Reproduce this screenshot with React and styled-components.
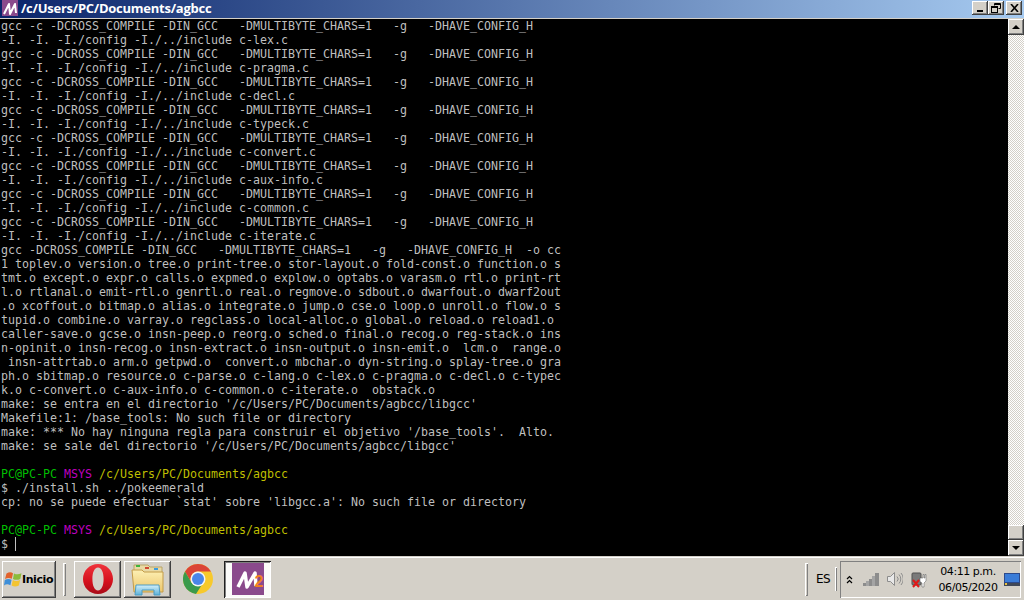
import React from 'react'
import styled, { createGlobalStyle, css } from 'styled-components'

const GlobalStyle = createGlobalStyle`
  html, body { margin: 0; padding: 0; background: #000; }
  * { box-sizing: border-box; }
`

const raised = css`
  background: #d4d0c8;
  box-shadow: inset -1px -1px 0 #404040, inset 1px 1px 0 #fff, inset -2px -2px 0 #808080;
`

const Screen = styled.div`
  width: 1024px;
  height: 600px;
  display: flex;
  flex-direction: column;
  overflow: hidden;
`

const TitleBar = styled.div`
  height: 19px;
  flex: none;
  display: flex;
  align-items: center;
  padding: 0 2px 2px 2px;
  background: linear-gradient(to right, #0a246a, #a6caf0);
  border-bottom: 1px solid #d4d0c8;
`

const TitleText = styled.span`
  margin-left: 3px;
  color: #fff;
  font: bold 13px "Open Sans", sans-serif;
  letter-spacing: -0.25px;
  white-space: pre;
`

const WindowButtons = styled.div`
  margin-left: auto;
  display: flex;
`

const WindowButton = styled.div`
  ${raised}
  width: 16px;
  height: 14px;
  display: flex;
  align-items: center;
  justify-content: center;
  margin-left: ${p => p.$gap || 0}px;
`

const Body = styled.div`
  flex: 1;
  min-height: 0;
  display: flex;
  background: #000;
`

const Output = styled.div`
  flex: 1;
  padding-left: 1px;
  font-family: "DejaVu Sans Mono", monospace;
  font-size: 11.63px;
  color: #bfbfbf;
`

const Line = styled.div`
  height: 14px;
  line-height: 14px;
  white-space: pre;
`

const Seg = styled.span`
  color: ${p => p.$color};
`

const Caret = styled.span`
  display: inline-block;
  width: 1px;
  height: 14px;
  background: #bfbfbf;
  vertical-align: top;
`

const ScrollBar = styled.div`
  width: 16px;
  flex: none;
  display: flex;
  flex-direction: column;
`

const ScrollButton = styled.div`
  ${raised}
  height: 16px;
  flex: none;
  display: flex;
  align-items: center;
  justify-content: center;
`

const Track = styled.div`
  flex: 1;
  background-image: conic-gradient(#d4d0c8 25%, #fff 0 50%, #d4d0c8 0 75%, #fff 0);
  background-size: 2px 2px;
`

const Thumb = styled.div`
  ${raised}
  height: 15px;
  flex: none;
`

const Arrow = styled.div`
  width: 0;
  height: 0;
  border-left: 4px solid transparent;
  border-right: 4px solid transparent;
  ${p => (p.$down ? 'border-top: 4px solid #000;' : 'border-bottom: 4px solid #000;')}
`

const TaskBar = styled.div`
  height: 44px;
  flex: none;
  display: flex;
  align-items: center;
  padding: 3px 3px 2px 2px;
  background: #d4d0c8;
  border-top: 1px solid #d4d0c8;
  box-shadow: inset 0 1px 0 #fff;
`

const StartButton = styled.div`
  ${raised}
  width: 54px;
  height: 37px;
  display: flex;
  align-items: center;
  padding-left: 2px;
  font: bold 11px "DejaVu Sans", sans-serif;
  letter-spacing: -0.4px;
  color: #000;
`

const Divider = styled.div`
  width: ${p => (p.$small ? 2 : 3)}px;
  height: ${p => (p.$small ? 24 : 33)}px;
  flex: none;
  margin: ${p => p.$margin};
  background: #d4d0c8;
  box-shadow: inset 1px 1px 0 #fff, inset -1px -1px 0 #808080;
`

const AppButton = styled.div`
  width: 47px;
  height: 37px;
  flex: none;
  margin-right: 3px;
  display: flex;
  align-items: center;
  justify-content: center;
  ${p => (p.$flat ? '' : raised)}
  ${p => p.$pressed && css`
    background: #fbfbf9;
    box-shadow: inset 1px 1px 0 #202020, inset -1px -1px 0 #fff, inset 2px 2px 0 #808080;
  `}
`

const Lang = styled.div`
  width: 27px;
  padding-left: 3px;
  text-align: center;
  font: 12px "DejaVu Sans", sans-serif;
  letter-spacing: -0.5px;
  color: #000;
`

const Tray = styled.div`
  margin-left: 3px;
  width: 181px;
  height: 37px;
  flex: none;
  display: flex;
  align-items: center;
  padding-left: 6px;
  box-shadow: inset 1px 1px 0 #808080, inset -1px -1px 0 #fff;
`

const TrayIcon = styled.div`
  display: flex;
  flex: none;
  margin-left: ${p => p.$left}px;
`

const Clock = styled.div`
  width: 72px;
  margin: 1px 0 0 5px;
  flex: none;
  text-align: center;
  font: 11px/16px "DejaVu Sans", sans-serif;
  letter-spacing: -0.45px;
  color: #000;
`

const flagsLine = 'gcc -c -DCROSS_COMPILE -DIN_GCC   -DMULTIBYTE_CHARS=1   -g   -DHAVE_CONFIG_H'
const sources = ['c-lex.c', 'c-pragma.c', 'c-decl.c', 'c-typeck.c', 'c-convert.c', 'c-aux-info.c', 'c-common.c', 'c-iterate.c']

const lines = [
  ...sources.flatMap(src => [flagsLine, `-I. -I. -I./config -I./../include ${src}`]),
  'gcc -DCROSS_COMPILE -DIN_GCC   -DMULTIBYTE_CHARS=1   -g   -DHAVE_CONFIG_H  -o cc',
  '1 toplev.o version.o tree.o print-tree.o stor-layout.o fold-const.o function.o s',
  'tmt.o except.o expr.o calls.o expmed.o explow.o optabs.o varasm.o rtl.o print-rt',
  'l.o rtlanal.o emit-rtl.o genrtl.o real.o regmove.o sdbout.o dwarfout.o dwarf2out',
  '.o xcoffout.o bitmap.o alias.o integrate.o jump.o cse.o loop.o unroll.o flow.o s',
  'tupid.o combine.o varray.o regclass.o local-alloc.o global.o reload.o reload1.o',
  'caller-save.o gcse.o insn-peep.o reorg.o sched.o final.o recog.o reg-stack.o ins',
  'n-opinit.o insn-recog.o insn-extract.o insn-output.o insn-emit.o  lcm.o  range.o',
  ' insn-attrtab.o arm.o getpwd.o  convert.o mbchar.o dyn-string.o splay-tree.o gra',
  'ph.o sbitmap.o resource.o c-parse.o c-lang.o c-lex.o c-pragma.o c-decl.o c-typec',
  'k.o c-convert.o c-aux-info.o c-common.o c-iterate.o  obstack.o',
  "make: se entra en el directorio '/c/Users/PC/Documents/agbcc/libgcc'",
  'Makefile:1: /base_tools: No such file or directory',
  "make: *** No hay ninguna regla para construir el objetivo '/base_tools'.  Alto.",
  "make: se sale del directorio '/c/Users/PC/Documents/agbcc/libgcc'",
]

const Prompt = () => (
  <Line>
    <Seg $color="#00bf00">PC@PC-PC</Seg> <Seg $color="#bf00bf">MSYS</Seg> <Seg $color="#bfbf00">/c/Users/PC/Documents/agbcc</Seg>
  </Line>
)

const MsysIcon = () => (
  <svg width="16" height="16" viewBox="0 0 16 16">
    <rect width="16" height="16" fill="#8a4a8c" />
    <path d="M2 14L7 4l1 10 5-10 1 9" fill="none" stroke="#fff" strokeWidth="2" strokeLinejoin="round" />
  </svg>
)

const MinIcon = () => <svg width="8" height="8"><rect x="1" y="6" width="6" height="2" fill="#000" /></svg>
const RestoreIcon = () => (
  <svg width="10" height="10" fill="none" stroke="#000">
    <path d="M3.5 2.5V.5h6v5h-2" />
    <path d="M3 1.5h6" />
    <rect x=".5" y="3.5" width="6" height="6" />
    <path d="M0 4.5h7" />
  </svg>
)
const CloseIcon = () => (
  <svg width="9" height="8" stroke="#000" strokeWidth="1.6"><path d="M1 0l7 8M8 0L1 8" /></svg>
)

const WinFlag = () => (
  <svg width="18" height="16" viewBox="0 0 18 16">
    <path d="M2.500 2.500C5 1 7 1 9 2.200L7.800 7.800C5.500 6.600 3.500 6.600 1 8z" fill="#e2622c" />
    <path d="M10 2.400c2.500 1.200 4.500 1.200 7.500-.2L16.300 7.900c-2.800 1.200-5 1.200-7.300 0z" fill="#8cbc3c" />
    <path d="M.8 9C3.300 7.600 5.300 7.600 7.600 8.800L6.400 14.300C4 13 2 13 0 14.500z" fill="#3f8fd8" />
    <path d="M8.800 9c2.300 1.200 4.500 1.200 7.300 0L14.900 14.600c-2.800 1.200-5 1.200-7.300 0z" fill="#f4c430" />
  </svg>
)

const OperaIcon = () => (
  <svg width="32" height="32" viewBox="0 0 32 32">
    <defs>
      <linearGradient id="op" x1="0" y1="0" x2="0" y2="1">
        <stop offset="0" stopColor="#f0343c" />
        <stop offset="0.6" stopColor="#d4101c" />
        <stop offset="1" stopColor="#a80c18" />
      </linearGradient>
    </defs>
    <path fillRule="evenodd" fill="url(#op)" d="M16 1c8.500 0 15 6.700 15 15s-6.500 15-15 15S1 24.300 1 16 7.500 1 16 1zm0 3.500c-3.700 0-5.600 5.200-5.600 11.500s1.900 11.500 5.600 11.500 5.600-5.200 5.600-11.500S19.700 4.500 16 4.500z" />
  </svg>
)

const ExplorerIcon = () => (
  <svg width="34" height="34" viewBox="0 0 34 34">
    <defs>
      <linearGradient id="fold" x1="0" y1="0" x2="0" y2="1">
        <stop offset="0" stopColor="#fdf0b4" />
        <stop offset="1" stopColor="#ecc66c" />
      </linearGradient>
      <linearGradient id="base" x1="0" y1="0" x2="0" y2="1">
        <stop offset="0" stopColor="#d4f0fa" />
        <stop offset="1" stopColor="#5ab0d8" />
      </linearGradient>
    </defs>
    <path d="M3 3h14l2 2h12v8H3z" fill="#e8d9a4" stroke="#b8a468" />
    <rect x="5" y="3" width="4" height="2" fill="#3cb43c" />
    <rect x="14" y="5" width="4" height="2" fill="#d04830" />
    <rect x="23" y="6" width="4" height="2" fill="#3c9ce0" />
    <path d="M1 8h10l2 2h19v20H3z" fill="url(#fold)" stroke="#c49c48" />
    <path d="M5 23h23l1 10h-6v-5H11v5H4z" fill="url(#base)" stroke="#4d9cc4" />
  </svg>
)

const ChromeIcon = () => (
  <svg width="30" height="30" viewBox="-15 -15 30 30">
    <circle r="15" fill="#f7c92c" />
    <path d="M0 -15A15 15 0 0 0 -13 -7.500L-6.500 3.750A7.500 7.500 0 0 1 0 -7.500H13A15 15 0 0 0 0 -15z" fill="#db4437" />
    <path d="M-13 -7.500A15 15 0 0 0 -2 14.900L5 4A7.500 7.500 0 0 1 -6.500 3.750z" fill="#3a9a4c" />
    <circle r="7.500" fill="#f4f4f4" />
    <circle r="6" fill="#4a86e8" />
  </svg>
)

const M2Icon = () => (
  <svg width="32" height="32" viewBox="0 0 32 32">
    <rect width="32" height="32" fill="#8a4a8c" />
    <path d="M6 24l7-14 2 14 8-14 1 13" fill="none" stroke="#fff" strokeWidth="3.500" strokeLinejoin="round" />
    <text x="27" y="24" textAnchor="middle" fill="#f08020" fontFamily="Liberation Sans" fontWeight="bold" fontSize="16">2</text>
  </svg>
)

const ChevronIcon = () => (
  <svg width="7" height="9" fill="none" stroke="#000" strokeWidth="1.200"><path d="M1 4l2.500-2.500L6 4M1 8l2.500-2.500L6 8" /></svg>
)

const SignalIcon = () => (
  <svg width="16" height="13" fill="#8c8c8c">
    <rect x="0" y="10" width="3" height="3" />
    <rect x="3" y="8" width="3" height="5" fill="#a4a4a4" />
    <rect x="6" y="6" width="3" height="7" />
    <rect x="9" y="3" width="3" height="10" fill="#a4a4a4" />
    <rect x="12" y="0" width="4" height="13" />
  </svg>
)

const SpeakerIcon = () => (
  <svg width="16" height="14" fill="none" stroke="#8c8c8c">
    <path d="M.5 4.500h3L7.500.500v13l-4-4h-3z" fill="#e8e8e8" />
    <path d="M10 4.500a3.500 3.500 0 0 1 0 5M12 2.500a6.500 6.500 0 0 1 0 9M14 1a9 9 0 0 1 0 12" />
  </svg>
)

const PowerIcon = () => (
  <svg width="16" height="17" viewBox="0 0 16 17">
    <rect x="1" y="2" width="9" height="12" rx="1" fill="#7a7a7a" stroke="#505050" />
    <path d="M9 7h3V3.500h1V7h1V3.500h1V10l-2 2v4h-2v-4l-2-1.500z" fill="#fff" stroke="#555" strokeWidth=".5" />
    <path d="M2 9l6 7M8 9l-6 7" stroke="#e01818" strokeWidth="2" />
  </svg>
)

const DesktopIcon = () => (
  <svg width="16" height="13" viewBox="0 0 16 13">
    <rect width="16" height="13" fill="#2c4a8c" />
    <rect x="1" y="1" width="14" height="8" fill="#3a7cd8" />
    <rect y="10" width="16" height="3" fill="#404858" />
    <rect x="1" y="10" width="2" height="2" fill="#e8c040" />
  </svg>
)

export default function App() {
  return (
    <Screen>
      <GlobalStyle />
      <TitleBar>
        <MsysIcon />
        <TitleText>/c/Users/PC/Documents/agbcc</TitleText>
        <WindowButtons>
          <WindowButton><MinIcon /></WindowButton>
          <WindowButton><RestoreIcon /></WindowButton>
          <WindowButton $gap={2}><CloseIcon /></WindowButton>
        </WindowButtons>
      </TitleBar>
      <Body>
        <Output>
          {lines.map((text, i) => <Line key={i}>{text}</Line>)}
          <Line />
          <Prompt />
          <Line>$ ./install.sh ../pokeemerald</Line>
          <Line>cp: no se puede efectuar `stat' sobre 'libgcc.a': No such file or directory</Line>
          <Line />
          <Prompt />
          <Line>$ <Caret /></Line>
        </Output>
        <ScrollBar>
          <ScrollButton><Arrow /></ScrollButton>
          <Track />
          <Thumb />
          <ScrollButton><Arrow $down /></ScrollButton>
        </ScrollBar>
      </Body>
      <TaskBar>
        <StartButton><WinFlag />Inicio</StartButton>
        <Divider $margin="0 8px 0 7px" />
        <AppButton><OperaIcon /></AppButton>
        <AppButton><ExplorerIcon /></AppButton>
        <AppButton $flat><ChromeIcon /></AppButton>
        <AppButton $pressed><M2Icon /></AppButton>
        <Divider $margin="0 0 0 auto" />
        <Lang>ES</Lang>
        <Divider $small $margin="0" />
        <Tray>
          <TrayIcon $left={0}><ChevronIcon /></TrayIcon>
          <TrayIcon $left={10}><SignalIcon /></TrayIcon>
          <TrayIcon $left={8}><SpeakerIcon /></TrayIcon>
          <TrayIcon $left={8}><PowerIcon /></TrayIcon>
          <Clock>04:11 p.m.<br />06/05/2020</Clock>
          <TrayIcon $left={0}><DesktopIcon /></TrayIcon>
        </Tray>
      </TaskBar>
    </Screen>
  )
}
